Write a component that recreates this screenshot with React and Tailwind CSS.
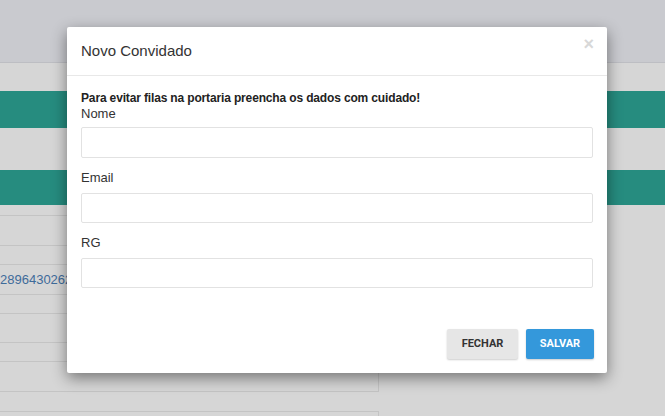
import React from 'react';

export default function App() {
  const linhas = [
    { h: 'h-[30px]' },
    { h: 'h-[19px]' },
    { h: 'h-[30px]', texto: '2896430262' },
    { h: 'h-[19px]' },
    { h: 'h-[29px]' },
    { h: 'h-[19px]' },
  ];

  return (
    <div className="relative w-[665px] h-[416px] overflow-hidden bg-[#d6d6d6] font-['Liberation_Sans',Arial,sans-serif]">
      {/* fundo da página (sob o overlay) */}
      <div className="h-[63px] bg-[#c9cacf] border-b border-[#bdbec3]" />
      <div className="mt-[28px] h-[37px] bg-[#268c7f]" />
      <div className="mt-[42px] h-[35px] bg-[#268c7f]" />
      <div className="mt-[10px] w-[480px] border-t border-[#c4c4c4]">
        {linhas.map((l, i) => (
          <div key={i} className={`${l.h} border-b border-[#c4c4c4] flex items-center text-[13px] text-[#3e6b9a]`}>
            {l.texto}
          </div>
        ))}
        <div className="h-[30px] w-[379px] border-r border-b border-[#c4c4c4]" />
        <div className="mt-[19px] h-[30px] w-[379px] border-r border-t border-[#c4c4c4]" />
      </div>

      {/* modal */}
      <div className="absolute left-[67px] top-[27px] w-[540px] bg-white rounded-[2px] shadow-[0_5px_15px_rgba(0,0,0,0.45)]">
        <div className="relative h-[49px] px-[14px] flex items-center border-b border-[#e8e8e8]">
          <h4 className="text-[15px] text-[#333]">Novo Convidado</h4>
          <span className="absolute right-[13px] top-[8px] text-[18px] font-bold leading-none text-[#d8d8d8]">×</span>
        </div>
        <div className="px-[14px] pt-[14px]">
          <p className="text-[12px] leading-[16px] font-bold text-[#222] tracking-[-0.15px]">
            Para evitar filas na portaria preencha os dados com cuidado!
          </p>
          <label className="block text-[13px] leading-[16px] text-[#333]">Nome</label>
          <input type="text" className="block mt-[5px] w-full h-[31px] border border-[#e2e2e2] rounded-[2px] outline-none" />
          <label className="block mt-[12px] text-[13px] leading-[16px] text-[#333]">Email</label>
          <input type="text" className="block mt-[7px] w-full h-[30px] border border-[#e2e2e2] rounded-[2px] outline-none" />
          <label className="block mt-[12px] text-[13px] leading-[16px] text-[#333]">RG</label>
          <input type="text" className="block mt-[7px] w-full h-[30px] border border-[#e2e2e2] rounded-[2px] outline-none" />
        </div>
        <div className="flex justify-end gap-[8px] px-[13px] pt-[41px] pb-[14px]">
          <button className="w-[71px] h-[30px] bg-[#e6e6e6] rounded-[2px] shadow-[0_1px_2px_rgba(0,0,0,0.2)] text-[11px] font-bold text-[#333] font-['Roboto',sans-serif]">
            FECHAR
          </button>
          <button className="w-[68px] h-[30px] bg-[#3498db] rounded-[2px] shadow-[0_1px_2px_rgba(0,0,0,0.2)] text-[11px] font-bold text-white font-['Roboto',sans-serif]">
            SALVAR
          </button>
        </div>
      </div>
    </div>
  );
}
